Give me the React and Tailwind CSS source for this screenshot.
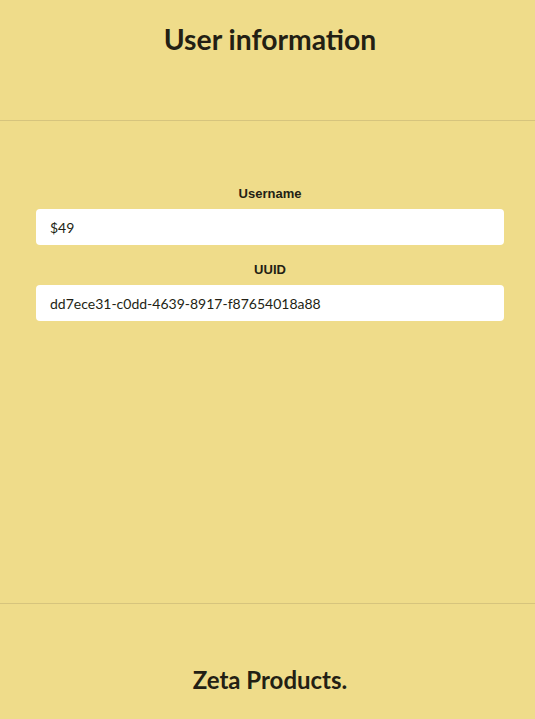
export default function App() {
  return (
    <div className="w-[535px] h-[719px] overflow-hidden bg-[#efdc8a]">
      <div className="w-[540px] h-[719px] flex flex-col text-[#231f14]" style={{ fontFamily: 'Lato, sans-serif' }}>
        <header className="h-[121px] shrink-0 flex justify-center pt-[21px] border-b border-[#d6c47d]">
          <h1 className="text-[28.3px] leading-[36px] font-bold">User information</h1>
        </header>
        <main className="h-[483px] shrink-0 flex flex-col items-center px-9 pt-[65px] border-b border-[#d6c47d]">
          <label className="text-[13px] leading-[16px] font-bold mb-[7px]" style={{ fontFamily: '"Liberation Sans", Arial, sans-serif' }}>Username</label>
          <div className="w-full h-9 bg-white rounded-[4px] flex items-center px-[14px] text-[14px]">$49</div>
          <label className="text-[13px] leading-[16px] font-bold mt-[17px] mb-[7px]" style={{ fontFamily: '"Liberation Sans", Arial, sans-serif' }}>UUID</label>
          <div className="w-full h-9 bg-white rounded-[4px] flex items-center px-[14px] text-[14px]">dd7ece31-c0dd-4639-8917-f87654018a88</div>
        </main>
        <footer className="flex-1 flex justify-center pt-[61px]">
          <h2 className="text-[24px] leading-[30px] font-bold">Zeta Products.</h2>
        </footer>
      </div>
    </div>
  );
}
